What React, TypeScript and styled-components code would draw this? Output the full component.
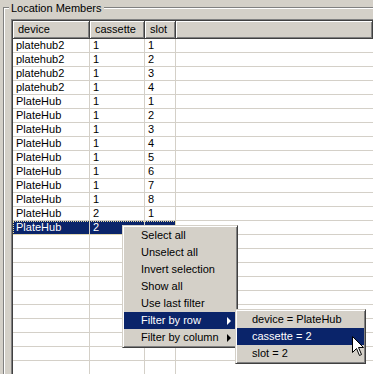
import React from "react";
import styled, { createGlobalStyle } from "styled-components";

const GlobalStyle = createGlobalStyle`
  html, body {
    margin: 0;
    padding: 0;
    background: #d4d0c8;
    overflow: hidden;
  }
  body {
    font-family: "Liberation Sans", Arial, sans-serif;
    font-size: 11px;
    color: #000;
  }
`;

type Member = { device: string; cassette: string; slot: string };

// last row: slot sits under the context menu, so it is left blank
const members: Member[] = [
  { device: "platehub2", cassette: "1", slot: "1" },
  { device: "platehub2", cassette: "1", slot: "2" },
  { device: "platehub2", cassette: "1", slot: "3" },
  { device: "platehub2", cassette: "1", slot: "4" },
  { device: "PlateHub", cassette: "1", slot: "1" },
  { device: "PlateHub", cassette: "1", slot: "2" },
  { device: "PlateHub", cassette: "1", slot: "3" },
  { device: "PlateHub", cassette: "1", slot: "4" },
  { device: "PlateHub", cassette: "1", slot: "5" },
  { device: "PlateHub", cassette: "1", slot: "6" },
  { device: "PlateHub", cassette: "1", slot: "7" },
  { device: "PlateHub", cassette: "1", slot: "8" },
  { device: "PlateHub", cassette: "2", slot: "1" },
  { device: "PlateHub", cassette: "2", slot: "" },
];

const columns = [
  { key: "device", width: 77 },
  { key: "cassette", width: 55 },
  { key: "slot", width: 31 },
] as const;

const menuItems = [
  "Select all",
  "Unselect all",
  "Invert selection",
  "Show all",
  "Use last filter",
  "Filter by row",
  "Filter by column",
];

const subItems = ["device = PlateHub", "cassette = 2", "slot = 2"];

const Screen = styled.div`
  position: relative;
  width: 373px;
  height: 374px;
  overflow: hidden;
  background: #d4d0c8;
`;

const Frame = styled.div`
  position: relative;
  margin: 7px 0 0 3px;
  height: 420px;
  padding: 11px 0 0 7px;
  border-top: 1px solid #808080;
  border-left: 1px solid #808080;
  box-shadow: inset 1px 1px 0 #fff;
`;

const Legend = styled.span`
  position: absolute;
  top: -8px;
  left: 5px;
  padding: 0 2px;
  line-height: 16px;
  background: #d4d0c8;
`;

const Table = styled.div`
  display: flex;
  flex-direction: column;
  height: 100%;
  background: #fff;
  border-top: 1px solid #808080;
  border-left: 1px solid #808080;
  box-shadow: inset 1px 1px 0 #404040;
  padding: 1px 0 0 1px;
`;

const HeaderRow = styled.div`
  display: flex;
  height: 18px;
  background: #d4d0c8;
`;

const HeaderCell = styled.div<{ $w?: number }>`
  box-sizing: border-box;
  ${(p) => (p.$w ? `width: ${p.$w}px;` : "flex: 1;")}
  height: 18px;
  padding-left: 5px;
  line-height: 16px;
  border-right: 1px solid #404040;
  border-bottom: 1px solid #404040;
  box-shadow: inset 1px 1px 0 #fff, inset -1px -1px 0 #808080;
  white-space: nowrap;
  overflow: hidden;
`;

const Row = styled.div`
  display: flex;
  height: 14px;
`;

const Selection = styled.div<{ $selected?: boolean }>`
  display: flex;
  background: ${(p) => (p.$selected ? "#0a246a" : "transparent")};
  color: ${(p) => (p.$selected ? "#fff" : "#000")};
  outline: ${(p) => (p.$selected ? "1px dotted #e8dca0" : "none")};
  outline-offset: -1px;
`;

const Cell = styled.div<{ $w?: number }>`
  box-sizing: border-box;
  ${(p) => (p.$w ? `width: ${p.$w}px;` : "flex: 1;")}
  height: 14px;
  padding-left: 3px;
  line-height: 13px;
  border-right: 1px solid #d4d0c8;
  border-bottom: 1px solid #d4d0c8;
  white-space: nowrap;
  overflow: hidden;
`;

const Filler = styled.div`
  flex: 1;
  height: 14px;
  box-sizing: border-box;
  border-bottom: 1px solid #d4d0c8;
`;

const Menu = styled.div<{ $width: number }>`
  position: absolute;
  width: ${(p) => p.$width}px;
  padding: 1px;
  background: #d4d0c8;
  border: 1px solid;
  border-color: #d4d0c8 #404040 #404040 #d4d0c8;
  box-shadow: inset 1px 1px 0 #fff, inset -1px -1px 0 #808080;
  z-index: 2;
`;

const ContextMenu = styled(Menu)`
  left: 122px;
  top: 225px;
`;

const SubMenu = styled(Menu)`
  left: calc(100% - 1px);
  top: -3px;
  color: #000;
`;

const Item = styled.div<{ $active?: boolean; $indent: number }>`
  position: relative;
  height: 17px;
  line-height: 17px;
  padding-left: ${(p) => p.$indent}px;
  white-space: nowrap;
  background: ${(p) => (p.$active ? "#0a246a" : "transparent")};
  color: ${(p) => (p.$active ? "#fff" : "#000")};
`;

const Arrow = styled.span`
  position: absolute;
  right: 5px;
  top: 5px;
  width: 0;
  height: 0;
  border-left: 4px solid currentColor;
  border-top: 4px solid transparent;
  border-bottom: 4px solid transparent;
`;

const Pointer = styled.svg`
  position: absolute;
  left: 352px;
  top: 336px;
  z-index: 3;
`;

const emptyRows = Array.from({ length: 14 });

export default function App() {
  return (
    <Screen>
      <GlobalStyle />
      <Frame>
        <Legend>Location Members</Legend>
        <Table>
          <HeaderRow>
            {columns.map((c) => (
              <HeaderCell key={c.key} $w={c.width}>
                {c.key}
              </HeaderCell>
            ))}
            <HeaderCell />
          </HeaderRow>
          {members.map((m, i) => (
            <Row key={i}>
              <Selection $selected={i === members.length - 1}>
                {columns.map((c) => (
                  <Cell key={c.key} $w={c.width}>
                    {m[c.key]}
                  </Cell>
                ))}
              </Selection>
              <Filler />
            </Row>
          ))}
          {emptyRows.map((_, i) => (
            <Row key={"e" + i}>
              {columns.map((c) => (
                <Cell key={c.key} $w={c.width} />
              ))}
              <Filler />
            </Row>
          ))}
        </Table>
      </Frame>

      <ContextMenu $width={112}>
        {menuItems.map((label) => {
          const hasSub = label.startsWith("Filter");
          const active = label === "Filter by row";
          return (
            <Item key={label} $active={active} $indent={17}>
              {label}
              {hasSub && <Arrow />}
              {active && (
                <SubMenu $width={127}>
                  {subItems.map((s) => (
                    <Item key={s} $active={s === "cassette = 2"} $indent={15}>
                      {s}
                    </Item>
                  ))}
                </SubMenu>
              )}
            </Item>
          );
        })}
      </ContextMenu>

      <Pointer width="13" height="21" viewBox="0 0 13 21">
        <path
          d="M0.5 0.5 L0.5 16.5 L4.5 12.5 L7.5 19.5 L9.5 18.5 L6.5 11.5 L11.5 11.5 Z"
          fill="#fff"
          stroke="#000"
          strokeWidth="1"
        />
      </Pointer>
    </Screen>
  );
}
